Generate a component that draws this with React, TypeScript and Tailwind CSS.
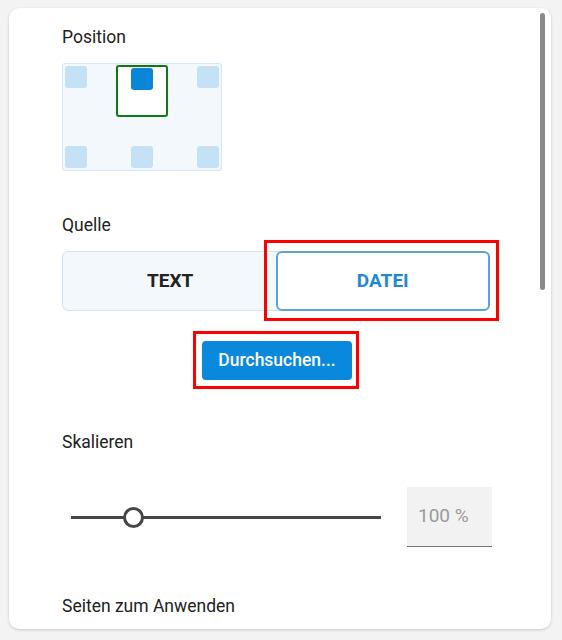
import React from "react"

const font = { fontFamily: "Roboto, 'Noto Sans', sans-serif" }

function PositionPicker() {
  const cell = "w-[22px] h-[22px] rounded-[3px] bg-[#c5e1f6]"
  return (
    <div className="mt-[14px] w-[160px] h-[108px] rounded-[3px] border border-[#d6e6f3] bg-[#f3f8fd] grid grid-cols-[22px_1fr_22px_1fr_22px] grid-rows-[52px_1fr_22px] p-[2px]">
      <div className={cell} />
      <div />
      <div className="-ml-[15px] -mt-[1px] w-[52px] h-[52px] rounded-[3px] border-2 border-[#0e7a12] bg-white flex justify-center">
        <div className="mt-[1px] w-[22px] h-[22px] rounded-[3px] bg-[#0a86d8]" />
      </div>
      <div />
      <div className={cell} />
      <div className="col-span-5" />
      <div className={cell} />
      <div />
      <div className={cell} />
      <div />
      <div className={cell} />
    </div>
  )
}

// red annotation frame drawn over a highlighted control
function Marked({ children, className }: { children: React.ReactNode; className: string }) {
  return (
    <div className="relative flex">
      {children}
      <div className={`absolute border-[3px] border-[#ff0000] pointer-events-none ${className}`} />
    </div>
  )
}

export default function App() {
  return (
    <div className="w-[562px] h-[640px] bg-[#f3f3f3] pl-[9px] pt-[8px] pr-[11px]" style={font}>
      <div className="relative h-[621px] bg-white rounded-[10px] shadow-[0_1px_3px_rgba(0,0,0,0.18)] overflow-hidden pl-[53px]">
        {/* scrollbar */}
        <div className="absolute right-[6px] top-[5px] w-[5px] h-[277px] rounded-full bg-[#8a8a8a]" />

        <div className="pt-[17px] text-[17.5px] leading-6 text-[#222]">Position</div>
        <PositionPicker />

        <div className="mt-[42px] text-[17.5px] leading-6 text-[#222]">Quelle</div>
        <div className="mt-[14px] w-[428px] h-[60px] flex rounded-[6px] border border-[#d3e4f1] bg-[#f3f8fd]">
          <div className="flex-1 flex items-center justify-center text-[19px] font-bold text-[#222]">TEXT</div>
          <div className="flex-1 -my-px -mr-px -ml-[2px]">
            <Marked className="-left-[12px] -right-[9px] -top-[11px] -bottom-[10px]">
              <div className="w-full h-[60px] flex items-center justify-center rounded-[6px] border-2 border-[#5ea3d6] bg-white text-[19px] font-bold text-[#1e88d8]">
                DATEI
              </div>
            </Marked>
          </div>
        </div>

        <div className="mt-[30px] flex pl-[140px]">
          <Marked className="-left-[9px] -right-[7px] -top-[10px] -bottom-[9px]">
            <button className="w-[150px] h-[39px] rounded-[4px] bg-[#0a88dc] text-white text-[17.5px] font-medium">
              Durchsuchen...
            </button>
          </Marked>
        </div>

        <div className="mt-[50px] text-[17.5px] leading-6 text-[#222]">Skalieren</div>
        <div className="mt-[33px] flex items-center h-[60px]">
          <div className="relative ml-[9px] w-[310px] h-[3px] bg-[#464646]">
            <div className="absolute left-[52px] top-[-9px] w-[21px] h-[21px] rounded-full border-[3px] border-[#464646] bg-white" />
          </div>
          <div className="ml-[26px] w-[85px] h-[60px] bg-[#f2f2f2] border-b border-[#777] flex items-center pl-[11px] text-[19px] text-[#9a9a9a]">
            100 %
          </div>
        </div>

        <div className="mt-[47px] text-[17.5px] leading-6 text-[#222]">Seiten zum Anwenden</div>
      </div>
    </div>
  )
}
